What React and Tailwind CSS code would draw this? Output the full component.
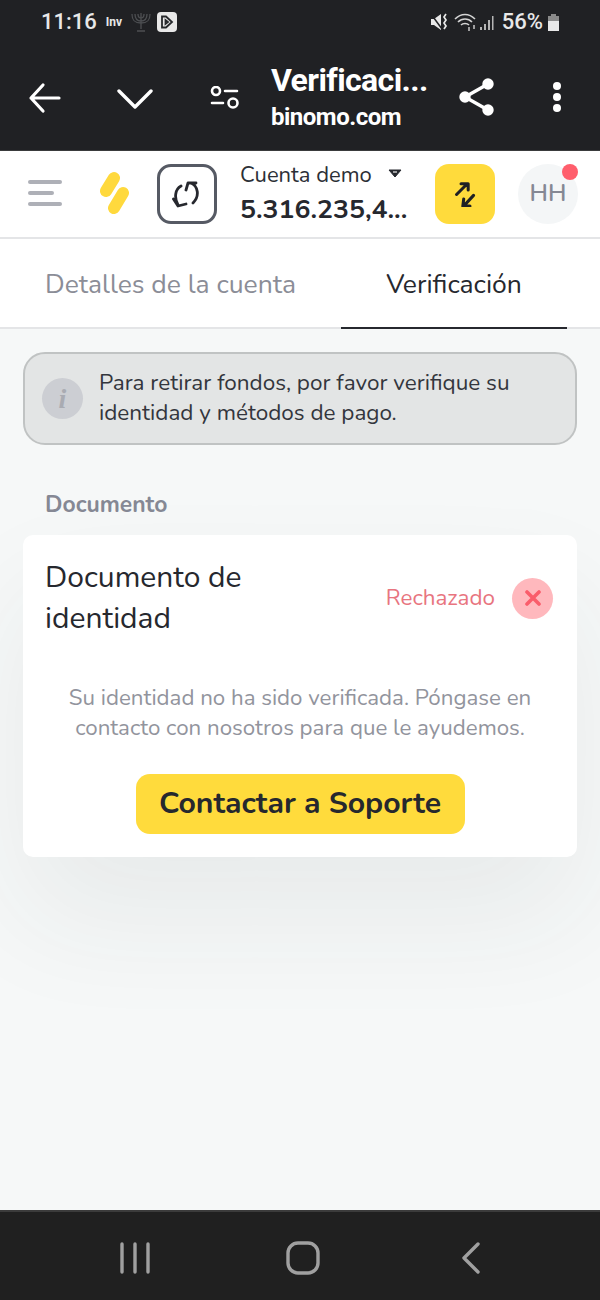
const NUNITO = "font-['Nunito','Lato',sans-serif]";

function StatusBar() {
  return (
    <div className="h-[44px] flex items-center justify-between pl-[41px] pr-[41px] font-['Roboto',sans-serif] text-[#e8e8e8]">
      <div className="flex items-center">
        <span className="text-[22px] font-medium leading-none">11:16</span>
        <span className="ml-[9px] w-[20px] text-[12px] font-bold leading-none">Inv</span>
        {/* menorah */}
        <svg width="20" height="20" viewBox="0 0 20 20" className="ml-[5px]" fill="none" stroke="#4d4f52" strokeWidth="1.3">
          <path d="M10 1v16M6 19h8M1 2c0 7 3 9 9 9s9-2 9-9M4 2c0 5 2 7 6 7s6-2 6-7M7 2c0 3 1 4 3 4s3-1 3-4" />
        </svg>
        <div className="ml-[6px] w-[20px] h-[20px] rounded-[4px] bg-[#e8e8e8] flex items-center justify-center">
          <svg width="14" height="14" viewBox="0 0 14 14" fill="none" stroke="#26282b" strokeWidth="1.8">
            <path d="M2 1.500h4l6 5.500-6 5.500H2zM5.500 5v4l2.500-2z" />
          </svg>
        </div>
      </div>
      <div className="flex items-center">
        {/* muted + vibrate */}
        <svg width="20" height="20" viewBox="0 0 20 20" fill="#e8e8e8">
          <path d="M1 7h3l7-5v16l-7-5H1z" />
          <path d="M1 2l11 15" stroke="#202124" strokeWidth="1.5" />
          <path d="M16 2l-2 3 2 3-2 3 2 3-2 3" fill="none" stroke="#e8e8e8" strokeWidth="1.7" />
        </svg>
        <svg width="26" height="20" viewBox="0 0 26 20" fill="none" stroke="#d4d4d4" strokeWidth="1.6" className="ml-[4px]">
          <path d="M1 7c6-6 14-6 20 0M4 10c4-4 10-4 14 0M7 13c2-2 6-2 8 0" />
          <path d="M15 15v4M20 13v4" strokeWidth="1.4" />
        </svg>
        <svg width="16" height="20" viewBox="0 0 16 20" fill="#b5b5b5" className="ml-[-1px]">
          <rect x="1" y="15" width="2" height="3" />
          <rect x="5" y="12" width="2" height="6" />
          <rect x="9" y="8" width="2" height="10" />
          <rect x="13" y="4" width="1.5" height="14" />
        </svg>
        <span className="ml-[7px] text-[22px] font-medium leading-none">56%</span>
        <div className="ml-[5px] w-[11px] h-[17px] flex flex-col items-center">
          <div className="w-[5px] h-[2px] bg-[#8a8a8a]" />
          <div className="w-[11px] h-[5px] bg-[#8a8a8a]" />
          <div className="w-[11px] h-[10px] bg-[#e8e8e8]" />
        </div>
      </div>
    </div>
  );
}

function Toolbar() {
  return (
    <div className="h-[106px] flex items-center pb-[1px] text-white font-['Roboto',sans-serif]">
      <div className="w-[90px] flex justify-center">
        <svg width="34" height="34" viewBox="0 0 34 34" fill="none" stroke="white" strokeWidth="3.2" strokeLinecap="round" strokeLinejoin="round" className="mt-[2px]">
          <path d="M31 17H3M15 4L3 17l12 13" />
        </svg>
      </div>
      <div className="w-[90px] flex justify-center">
        <svg width="36" height="24" viewBox="0 0 36 24" fill="none" stroke="white" strokeWidth="3.4" strokeLinecap="round" strokeLinejoin="round" className="mt-[2px]">
          <path d="M2 5l16 16L34 5" />
        </svg>
      </div>
      <div className="w-[90px] flex justify-center">
        <svg width="30" height="24" viewBox="0 0 30 24" fill="none" stroke="white" strokeWidth="2.6" strokeLinecap="round" className="mt-[2px]">
          <circle cx="6" cy="5" r="4" />
          <path d="M15 5h12M2 17h11" />
          <circle cx="23" cy="17" r="4.500" />
        </svg>
      </div>
      <div className="ml-[1px] w-[188px] flex flex-col">
        <span className="text-[32px] font-bold leading-[38px] tracking-[-0.6px]">Verificaci...</span>
        <span className="mt-[3px] text-[24px] font-bold leading-[30px] tracking-[-0.5px]">binomo.com</span>
      </div>
      <div>
        <svg width="36" height="40" viewBox="0 0 36 40" fill="white" stroke="white" strokeWidth="3.4">
          <circle cx="29" cy="7" r="4" />
          <circle cx="6" cy="20" r="4" />
          <circle cx="29" cy="33" r="4" />
          <path d="M29 7L6 20l23 13" fill="none" />
        </svg>
      </div>
      <div className="ml-[56px]">
        <svg width="12" height="32" viewBox="0 0 12 32" fill="white">
          <circle cx="6" cy="5" r="4" />
          <circle cx="6" cy="16" r="4" />
          <circle cx="6" cy="27" r="4" />
        </svg>
      </div>
    </div>
  );
}

function AppHeader() {
  return (
    <div className="h-[88px] bg-white border-b-2 border-[#e4e5e7] flex items-center">
      <div className="ml-[28px] w-[34px] flex flex-col gap-[7px] mb-[2px]">
        <div className="h-[4px] rounded-full bg-[#aeb0b7]" />
        <div className="h-[4px] w-[26px] rounded-full bg-[#aeb0b7]" />
        <div className="h-[4px] rounded-full bg-[#aeb0b7]" />
      </div>
      <svg width="32" height="44" viewBox="0 0 32 44" fill="none" stroke="#ffd93d" strokeWidth="12" strokeLinecap="round" className="ml-[36px] mb-[2px]">
        <path d="M16 7L8 20M25 22l-9 15" />
      </svg>
      <div className="ml-[27px] w-[60px] h-[60px] rounded-[14px] border-[3px] border-[#565a64] flex items-center justify-center">
        <svg width="30" height="30" viewBox="0 0 30 30" fill="none" stroke="#26282e" strokeWidth="2.800" strokeLinecap="round" strokeLinejoin="round">
          <path d="M9 7C3 10 2 19 6 26M1.500 20l4.500 7 8-2M19 4c7 3 9 13 2 20M14 11l2-7h8" />
        </svg>
      </div>
      <div className="ml-[23px] w-[188px] flex flex-col">
        <div className="flex items-center">
          <span className={`${NUNITO} text-[22px] leading-[26px] text-[#2c2f36]`}>Cuenta demo</span>
          <svg width="14" height="9" viewBox="0 0 14 9" className="ml-[16px] mb-[2px]">
            <path d="M1 1h12L7 8z" fill="#26282e" stroke="#26282e" strokeLinejoin="round" />
            <path d="M5 3h4" stroke="white" strokeWidth="1.100" />
          </svg>
        </div>
        <span className={`${NUNITO} mt-[3px] text-[26.600px] font-bold leading-[36px] text-[#26282e]`}>5.316.235,4...</span>
      </div>
      <div className="ml-[7px] w-[60px] h-[60px] rounded-[14px] bg-[#ffdb3c] flex items-center justify-center">
        <svg width="25" height="25" viewBox="0 0 28 28" fill="none" stroke="#1f2024" strokeWidth="3.400" strokeLinecap="round" strokeLinejoin="round">
          <path d="M4 14L16 2M9 2h8v7M23 15L12 27M12 19l-1 8h8" />
        </svg>
      </div>
      <div className="ml-[23px] relative w-[60px] h-[60px] rounded-full bg-[#f4f6f7] flex items-center justify-center pb-[3px]">
        <span className={`${NUNITO} text-[24px] font-semibold text-[#858894]`}>HH</span>
        <div className="absolute top-0 right-0 w-[16px] h-[16px] rounded-full bg-[#ff5e6c]" />
      </div>
    </div>
  );
}

function Tabs() {
  return (
    <div className="h-[90px] bg-white border-b-2 border-[#e4e5e7] flex">
      <div className={`${NUNITO} w-[341px] pl-[45px] pt-[4px] flex items-center text-[26.500px] text-[#8b8d97]`}>
        Detalles de la cuenta
      </div>
      <div className={`${NUNITO} relative w-[226px] pt-[4px] flex items-center justify-center text-[26.500px] text-[#26282e]`}>
        Verificación
        <div className="absolute left-0 right-0 bottom-[-2px] h-[2px] bg-[#26282e]" />
      </div>
    </div>
  );
}

function Notice() {
  return (
    <div className="mx-[23px] mt-[23px] h-[93px] rounded-[22px] border-2 border-[#c0c3c3] bg-[#e3e5e5] flex items-center pl-[17px]">
      <div className="w-[41px] h-[41px] rounded-full bg-[#ccced3] flex items-center justify-center shrink-0">
        <span className="font-['Liberation_Serif',serif] italic font-bold text-[28px] leading-none text-[#a9abb2]">i</span>
      </div>
      <p className={`${NUNITO} ml-[16px] mb-[2px] text-[22.500px] leading-[30px] text-[#33363d]`}>
        Para retirar fondos, por favor verifique su
        <br />
        identidad y métodos de pago.
      </p>
    </div>
  );
}

function DocumentCard() {
  return (
    <div className="mx-[23px] mt-[15px] h-[322px] rounded-[10px] bg-white shadow-[0_60px_120px_rgba(40,50,60,0.07)] px-[22px] pt-[22px] flex flex-col">
      <div className="flex items-center justify-between pr-[2px]">
        <span className={`${NUNITO} text-[30px] leading-[41px] text-[#26282e]`}>
          Documento de
          <br />
          identidad
        </span>
        <div className="flex items-center">
          <span className={`${NUNITO} text-[22.400px] text-[#e8757f]`}>Rechazado</span>
          <div className="ml-[17px] w-[41px] h-[41px] rounded-full bg-[#ffb8bd] flex items-center justify-center">
            <svg width="16" height="16" viewBox="0 0 16 16" fill="none" stroke="#fa5d6b" strokeWidth="3.600" strokeLinecap="round">
              <path d="M2 2l12 12M14 2L2 14" />
            </svg>
          </div>
        </div>
      </div>
      <p className={`${NUNITO} mt-[44px] text-center text-[22.300px] leading-[30px] text-[#92949d]`}>
        Su identidad no ha sido verificada. Póngase en
        <br />
        contacto con nosotros para que le ayudemos.
      </p>
      <button className={`${NUNITO} mt-[31px] self-center w-[329px] h-[60px] rounded-[14px] bg-[#ffdb3c] text-[30.200px] font-bold text-[#26282e]`}>
        Contactar a Soporte
      </button>
    </div>
  );
}

function NavBar() {
  return (
    <div className="h-[90px] bg-[#202020] border-t-2 border-[#3b3b3b] flex items-center pt-[4px]">
      <div className="w-[270px] flex justify-center">
        <svg width="32" height="32" viewBox="0 0 32 32" fill="none" stroke="#a0a0a0" strokeWidth="3.400" strokeLinecap="round">
          <path d="M3 2v28M16 2v28M29 2v28" />
        </svg>
      </div>
      <div className="w-[66px] flex justify-center">
        <svg width="34" height="34" viewBox="0 0 34 34" fill="none" stroke="#a0a0a0" strokeWidth="3.400">
          <rect x="2" y="2" width="30" height="30" rx="10" />
        </svg>
      </div>
      <div className="ml-[125px] w-[20px]">
        <svg width="20" height="32" viewBox="0 0 20 32" fill="none" stroke="#a0a0a0" strokeWidth="3.400" strokeLinecap="round" strokeLinejoin="round">
          <path d="M17 2L3 16l14 14" />
        </svg>
      </div>
    </div>
  );
}

export default function App() {
  return (
    <div className="w-[600px] h-[1300px] bg-[#f6f8f8] flex flex-col overflow-hidden">
      <div className="bg-[#202124] border-b border-[#3a3b3d]">
        <StatusBar />
        <Toolbar />
      </div>
      <AppHeader />
      <Tabs />

      <div className="flex-1">
        <Notice />
        <div className={`${NUNITO} ml-[45px] mt-[45px] text-[22.900px] font-bold leading-[30px] text-[#858894]`}>
          Documento
        </div>
        <DocumentCard />
      </div>

      <NavBar />
    </div>
  );
}
